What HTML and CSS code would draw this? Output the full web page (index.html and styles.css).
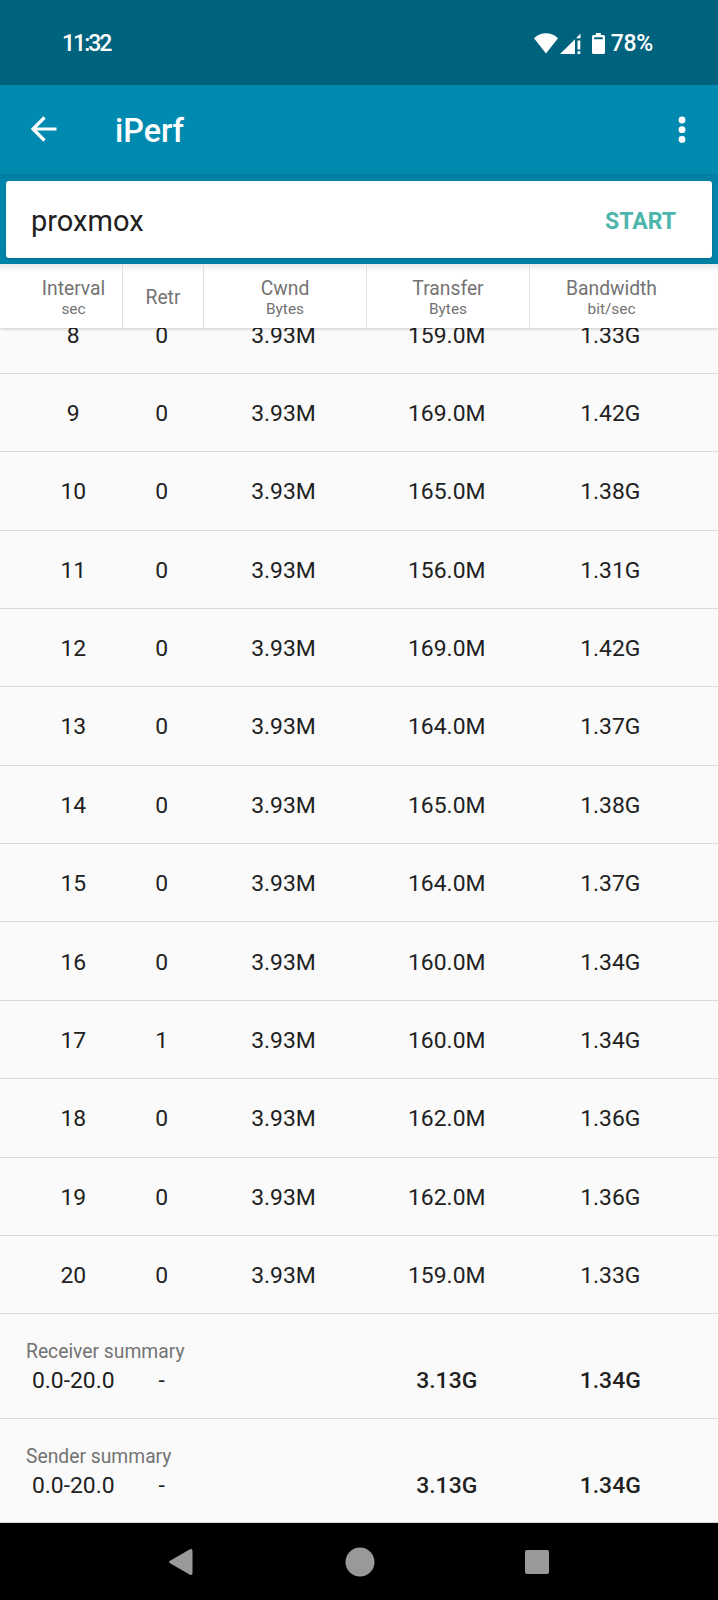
FILE: index.html
```
<!DOCTYPE html>
<html lang="en">
<head>
    <meta charset="UTF-8">
    <meta name="viewport" content="width=device-width, initial-scale=1.0">
    <title>iPerf</title>
    <link rel="stylesheet" href="styles.css">
</head>
<body>
    <div class="status-bar">
        <span class="clock">11:32</span>
        <div class="status-icons">
            <svg class="wifi" width="24" height="21" viewBox="0 0 24 21"><path d="M0 5.2C3.4 1.9 7.6.2 12 .2s8.600 1.700 12 5L12 20.500z"/></svg>
            <svg class="signal" width="21" height="21" viewBox="0 0 21 21"><path d="M0 21L15 6.200V21zM16 5.200L20.500.5V5.200zM17.500 7.500h2.800v9h-2.800zM17.500 18.200h2.800V21h-2.800z"/></svg>
            <svg class="battery" width="13" height="21" viewBox="0 0 13 21"><path fill-rule="evenodd" d="M3.800 0h5v2H11.500Q13 2 13 3.500V19.500Q13 21 11.500 21H1.500Q0 21 0 19.500V3.500Q0 2 1.500 2H3.800zM2.200 4.200V6.200H10.800V4.200z"/></svg>
            <span class="percent">78%</span>
        </div>
    </div>

    <div class="app-bar">
        <svg class="back" width="26" height="26" viewBox="0 0 26 26"><path d="M25.500 13H2.500M13.500 1.500L2 13L13.500 24.500"/></svg>
        <h1>iPerf</h1>
        <svg class="menu" width="8" height="28" viewBox="0 0 8 28"><circle cx="4" cy="4" r="3.400"/><circle cx="4" cy="13.700" r="3.400"/><circle cx="4" cy="23.400" r="3.400"/></svg>
    </div>

    <div class="search">
        <div class="search-box">
            <span class="host">proxmox</span>
            <span class="start">START</span>
        </div>
    </div>

    <div class="table-head">
        <div>Interval<small>sec</small></div>
        <div>Retr</div>
        <div>Cwnd<small>Bytes</small></div>
        <div>Transfer<small>Bytes</small></div>
        <div>Bandwidth<small>bit/sec</small></div>
    </div>

    <div class="results">
        <div id="rows"></div>
        <div class="summary">
            <p>Receiver summary</p>
            <div class="cells"><span>0.0-20.0</span><span>-</span><span></span><b>3.13G</b><b>1.34G</b></div>
        </div>
        <div class="summary">
            <p>Sender summary</p>
            <div class="cells"><span>0.0-20.0</span><span>-</span><span></span><b>3.13G</b><b>1.34G</b></div>
        </div>
    </div>

    <div class="nav-bar">
        <svg width="26" height="28" viewBox="0 0 26 28"><path d="M2.500 12.600L21.500 1.500Q24.500 0 24.500 3V25Q24.500 28 21.500 26.500L2.500 15.400Q-.5 14 2.500 12.600z"/></svg>
        <svg width="30" height="30" viewBox="0 0 30 30"><circle cx="15" cy="15" r="14.500"/></svg>
        <svg width="24" height="24" viewBox="0 0 24 24"><rect width="24" height="24" rx="2"/></svg>
    </div>

    <script>
        // interval, retr, transfer, bandwidth
        const results = [
            [8, 0, '159.0M', '1.33G'],
            [9, 0, '169.0M', '1.42G'],
            [10, 0, '165.0M', '1.38G'],
            [11, 0, '156.0M', '1.31G'],
            [12, 0, '169.0M', '1.42G'],
            [13, 0, '164.0M', '1.37G'],
            [14, 0, '165.0M', '1.38G'],
            [15, 0, '164.0M', '1.37G'],
            [16, 0, '160.0M', '1.34G'],
            [17, 1, '160.0M', '1.34G'],
            [18, 0, '162.0M', '1.36G'],
            [19, 0, '162.0M', '1.36G'],
            [20, 0, '159.0M', '1.33G']
        ];

        document.getElementById('rows').innerHTML = results.map(([sec, retr, transfer, bandwidth]) =>
            `<div class="row cells"><span>${sec}</span><span>${retr}</span><span>3.93M</span><span>${transfer}</span><span>${bandwidth}</span></div>`
        ).join('');
    </script>
</body>
</html>
```

FILE: styles.css
```
* { box-sizing: border-box; }
body {
    margin: 0;
    height: 1600px;
    display: flex;
    flex-direction: column;
    overflow: hidden;
    font-family: Roboto, sans-serif;
    color: #212121;
    background-color: #fafafa;
}
svg { display: block; flex: none; }

.status-bar {
    flex: none;
    height: 85px;
    padding: 1px 65px 0 62px;
    display: flex;
    align-items: center;
    justify-content: space-between;
    background-color: #00637e;
    color: #fff;
    fill: #fff;
    font-size: 23px;
    font-weight: 500;
}
.clock { letter-spacing: -2px; }
.status-icons { display: flex; align-items: center; }
.signal { margin-left: 2px; }
.battery { margin: 0 6px 0 11px; }
.percent { letter-spacing: -0.3px; }

.app-bar {
    flex: none;
    height: 89px;
    padding: 0 32px 0 31px;
    display: flex;
    align-items: center;
    background-color: #008aaf;
    color: #fff;
    fill: #fff;
}
.back { margin-bottom: 2px; fill: none; stroke: #fff; stroke-width: 3.2; }
h1 {
    flex: 1;
    margin: 2px 0 0 58px;
    font-size: 32.3px;
    font-weight: 500;
}

.search {
    flex: none;
    height: 90px;
    padding: 7px 6px 6px;
    background: linear-gradient(#007da1, #0084a9 10px);
}
.search-box {
    height: 77px;
    padding: 0 36px 0 25px;
    display: flex;
    align-items: center;
    justify-content: space-between;
    background-color: #fff;
    border-radius: 3px;
    box-shadow: 0 1px 3px rgba(0, 0, 0, 0.2);
}
.host { font-size: 29px; margin-top: 3px; }
.start { margin-top: 3px; font-size: 23px; font-weight: 700; color: #4db6ac; }

.table-head {
    flex: none;
    z-index: 1;
    height: 64px;
    padding: 0 25px;
    display: grid;
    grid-template-columns: 98px 81px 163px 163px 163px;
    background: linear-gradient(#e9eaeb, #fff 8px);
    box-shadow: 0 1px 3px rgba(0, 0, 0, 0.2);
    color: #737373;
    font-size: 19.3px;
    line-height: 22px;
}
.table-head div {
    padding-top: 4px;
    display: flex;
    flex-direction: column;
    align-items: center;
    justify-content: center;
    border-right: 1px solid #e0e0e0;
}
.table-head div:last-child { border-right: none; }
.table-head small { font-size: 15.4px; line-height: 19px; }

.results {
    flex: 1;
    min-height: 0;
    display: flex;
    flex-direction: column;
    justify-content: flex-end;
    overflow: hidden;
}
#rows { flex: none; }
.cells {
    display: grid;
    grid-template-columns: 96.5px 80.5px 163px 163.5px 163.5px;
    align-items: center;
    text-align: center;
    font-size: 22.9px;
}
.cells b { font-weight: 500; }
.row {
    height: 78.4px;
    padding: 2px 25px 0;
    border-bottom: 1px solid #d9d9d9;
}
.summary {
    flex: none;
    height: 104.3px;
    padding: 25px 25px 0;
    border-bottom: 1px solid #d9d9d9;
}
.summary p {
    margin: 0;
    padding-left: 1px;
    font-size: 19.3px;
    line-height: 25px;
    color: #737373;
}
.summary .cells { line-height: 33px; }

.nav-bar {
    flex: none;
    height: 77px;
    padding: 0 169px 0 168px;
    display: flex;
    align-items: center;
    justify-content: space-between;
    background-color: #000;
    fill: #999;
}
```
